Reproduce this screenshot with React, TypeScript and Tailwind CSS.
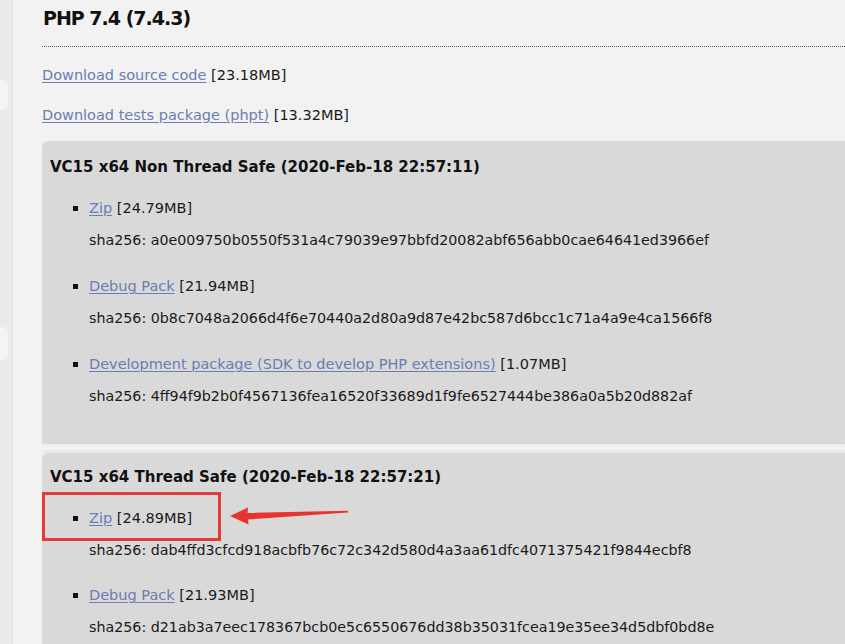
import React from "react";

const FONT = { fontFamily: '"DejaVu Sans", Verdana, sans-serif' };

type Item = { label: string; size: string; sha: string; highlight?: boolean };

function Bullet() {
  return <span className="absolute left-[-16px] top-[8px] block h-[5px] w-[5px] bg-[#111]" />;
}

function ListItem({ item, first, gap }: { item: Item; first: boolean; gap: string }) {
  return (
    <li className={`relative ${first ? "" : gap}`}>
      <div className="relative h-[20px] leading-[20px] whitespace-nowrap">
        <Bullet />
        <a href="#" className="text-[#6b7db3] underline underline-offset-[2px] decoration-[1px]">
          {item.label}
        </a>{" "}
        <span>[{item.size}]</span>
        {item.highlight && (
          <>
            <span className="pointer-events-none absolute left-[-47px] top-[-16px] h-[49px] w-[179px] border-[3px] border-[#e5393a]" />
            <svg
              className="pointer-events-none absolute left-[136px] top-[-10px]"
              width="125"
              height="30"
              viewBox="220 500 125 30"
            >
              <path
                d="M225 518 L243 509.5 L242.5 515 L343 512.8 L343 514.6 L243 521.5 L243.5 526.5 Z"
                fill="#e8332f"
              />
            </svg>
          </>
        )}
      </div>
      <div className="mt-[12px] h-[20px] text-[14.25px] leading-[20px] whitespace-nowrap">sha256: {item.sha}</div>
    </li>
  );
}

function Build({
  title,
  items,
  pt,
  pb,
  ulmt,
  gap,
}: {
  title: string;
  items: Item[];
  pt: string;
  pb: string;
  ulmt: string;
  gap: string;
}) {
  return (
    <div className={`rounded-tl-[6px] bg-[#d9d9d9] pl-[8px] ${pt} ${pb}`}>
      <div className="h-[20px] whitespace-nowrap text-[15px] font-bold leading-[20px] text-[#111]">{title}</div>
      <ul className={`ml-[39px] ${ulmt}`}>
        {items.map((it, i) => (
          <ListItem key={i} item={it} first={i === 0} gap={gap} />
        ))}
      </ul>
    </div>
  );
}

export default function App() {
  return (
    <div className="flex h-[644px] w-[845px] overflow-hidden bg-[#f2f2f2] text-[14.5px] text-[#1a1a1a]" style={FONT}>
      {/* left sidebar edge */}
      <div className="flex w-[42px] shrink-0">
        <div className="flex w-[13px] shrink-0">
          <div className="flex w-[11px] flex-col bg-[#ebebeb]">
            <div className="h-[80px]" />
            <div className="h-[30px] w-[8px] rounded-r-[6px] bg-[#f4f4f4]" />
            <div className="h-[217px]" />
            <div className="h-[33px] w-[8px] rounded-r-[6px] bg-[#f4f4f4]" />
          </div>
          <div className="w-[2px] bg-[#e4e4e4]" />
        </div>
        <div className="flex-1 bg-[#f2f2f2]" />
      </div>

      <div className="min-w-0 flex-1">
        <div className="box-content h-[24px] whitespace-nowrap pl-[1px] pt-[6px] text-[19px] font-bold leading-[24px] tracking-[-1px] text-[#111]">
          PHP 7.4 (7.4.3)
        </div>
        <div className="mt-[16px] border-t border-dotted border-[#555]" />
        <div className="mt-[18px] h-[20px] whitespace-nowrap leading-[20px]">
          <a href="#" className="text-[#6b7db3] underline underline-offset-[2px]">Download source code</a> [23.18MB]
        </div>
        <div className="mt-[20px] h-[20px] whitespace-nowrap leading-[20px]">
          <a href="#" className="text-[#6b7db3] underline underline-offset-[2px]">Download tests package (phpt)</a> [13.32MB]
        </div>
        <div className="mt-[16px]">
          <Build
            title="VC15 x64 Non Thread Safe (2020-Feb-18 22:57:11)"
            pt="pt-[16px]"
            pb="pb-[38px]"
            ulmt="mt-[21px]"
            gap="mt-[26px]"
            items={[
              { label: "Zip", size: "24.79MB", sha: "a0e009750b0550f531a4c79039e97bbfd20082abf656abb0cae64641ed3966ef" },
              { label: "Debug Pack", size: "21.94MB", sha: "0b8c7048a2066d4f6e70440a2d80a9d87e42bc587d6bcc1c71a4a9e4ca1566f8" },
              {
                label: "Development package (SDK to develop PHP extensions)",
                size: "1.07MB",
                sha: "4ff94f9b2b0f4567136fea16520f33689d1f9fe6527444be386a0a5b20d882af",
              },
            ]}
          />
        </div>
        <div className="h-[9px] bg-gradient-to-b from-[#ececec] via-[#f4f4f4] to-[#e6e6e6]" />
        <Build
          title="VC15 x64 Thread Safe (2020-Feb-18 22:57:21)"
          pt="pt-[14px]"
          pb="pb-[36px]"
          ulmt="mt-[21px]"
          gap="mt-[25px]"
          items={[
            { label: "Zip", size: "24.89MB", sha: "dab4ffd3cfcd918acbfb76c72c342d580d4a3aa61dfc4071375421f9844ecbf8", highlight: true },
            { label: "Debug Pack", size: "21.93MB", sha: "d21ab3a7eec178367bcb0e5c6550676dd38b35031fcea19e35ee34d5dbf0bd8e" },
          ]}
        />
      </div>
    </div>
  );
}
